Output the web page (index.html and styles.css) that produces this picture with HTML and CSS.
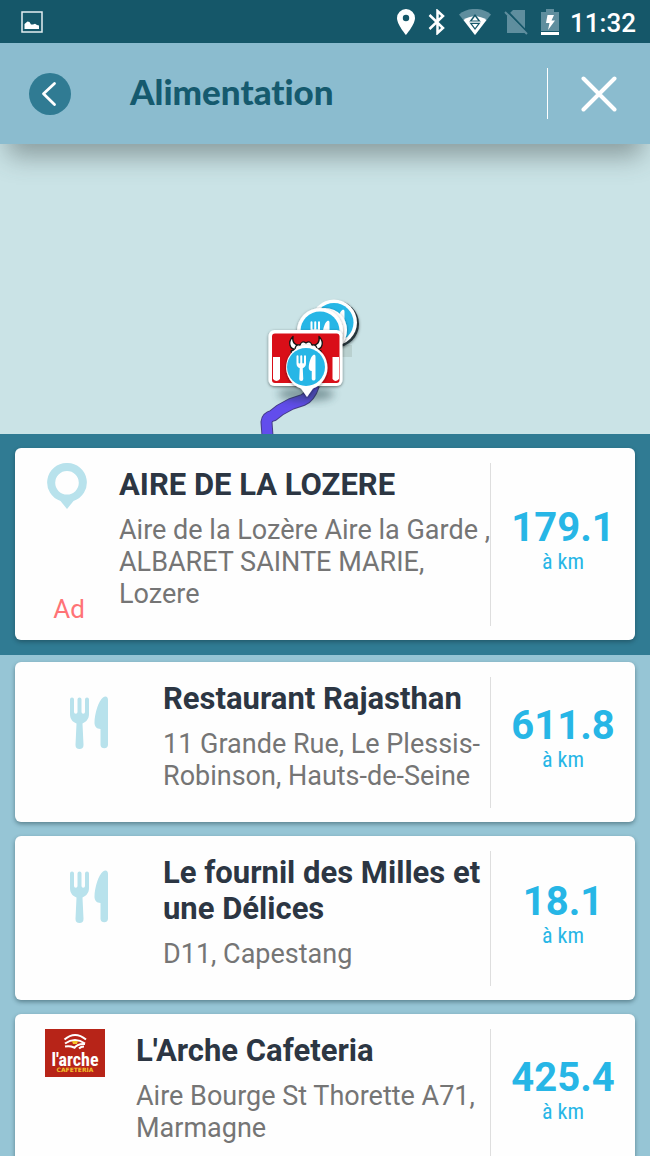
FILE: index.html
```html
<!DOCTYPE html>
<html lang="fr">
<head>
<meta charset="utf-8">
<meta name="viewport" content="width=device-width, initial-scale=1">
<title>Alimentation</title>
<link rel="stylesheet" href="styles.css">
</head>
<body>
<svg class="defs" width="0" height="0" aria-hidden="true">
  <symbol id="cutlery" viewBox="0 0 40 54">
    <path d="M1 4.500a2 2 0 0 1 4 0V17a1.600 1.600 0 0 0 3.500 0V4.500a2 2 0 0 1 4 0V17a1.600 1.600 0 0 0 3.500 0V4.500a2 2 0 0 1 4 0V19c0 5-3 8-6.500 9.500l1 21.500a4 4 0 0 1-8 0l1-21.500C3.500 27 1 24 1 19z"/>
    <path d="M39 5v45a3.800 3.800 0 0 1-7.500 0V34c-4 0-6-3-6-6C25.500 18 30 5 34 2.500c3-2 5-.500 5 2.500z"/>
  </symbol>
</svg>
<div class="screen">
  <div class="status">
    <svg class="status-picture" width="22" height="22" viewBox="0 0 22 22"><rect x="1" y="1" width="20" height="20" fill="none" stroke="#e4eef1" stroke-width="1.500"/><path d="M3.500 18v-5l3-2.500 2 .500 1.500 2.500h2l2-.800 2 1.300 2 .500V18z" fill="#fff"/></svg>
    <div class="status-right">
      <svg width="18" height="26" viewBox="0 0 18 26"><path fill="#fff" fill-rule="evenodd" d="M9 0a9 9 0 0 0-9 9c0 6.500 9 17 9 17s9-10.500 9-17a9 9 0 0 0-9-9zm0 5.800a3.200 3.200 0 1 1 0 6.400 3.200 3.200 0 0 1 0-6.400z"/></svg>
      <svg width="18" height="26" viewBox="0 0 18 26"><path fill="none" stroke="#fff" stroke-width="2.500" d="M1.500 6l13.500 13-5.500 5V2l5.500 5L1.500 20"/></svg>
      <svg width="32" height="26" viewBox="0 0 32 26"><path fill="#5f8e9e" d="M0 5.500C9-2 23-2 32 5.500L16 26z"/><path fill="#fff" d="M4.500 11c7-5 16-5 23 0L16 26z"/><path fill="#155769" d="M16 5l6 8-6 8-6-8z"/><path fill="#fff" d="M16 7.500l3 4h-6zM16 19l-3-4h6zM9 12.500h14v1.200H9z"/></svg>
      <svg width="24" height="26" viewBox="0 0 24 26"><path fill="#5f8e9e" d="M9 1h12v23H3V7z"/><path stroke="#155769" stroke-width="2" d="M3 2l22 23"/><path stroke="#5f8e9e" stroke-width="2" d="M1 3l22 22"/></svg>
      <svg width="18" height="26" viewBox="0 0 18 26"><path fill="#5f8e9e" d="M5 0h8v3h5v19H0V3h5z"/><path fill="#fff" d="M0 23h18v3H0zM6.500 6L5 14h3.500L7 21l7-9.500h-3.500L13 6z"/></svg>
      <span class="clock">11:32</span>
    </div>
  </div>
  <header class="header">
    <button class="back" type="button" aria-label="Retour"><svg width="42" height="42" viewBox="0 0 42 42"><circle cx="21" cy="21" r="21" fill="#307b93"/><path d="M25.500 10.500L14.500 20.800l11 10.800" fill="none" stroke="#fff" stroke-width="2.800" stroke-linecap="round" stroke-linejoin="round"/></svg></button>
    <h1 class="heading">Alimentation</h1>
    <button class="close" type="button" aria-label="Fermer"><svg width="36" height="36" viewBox="0 0 36 36"><path d="M2.500 2.500l31 31M33.500 2.500l-31 31" stroke="#fff" stroke-width="4" stroke-linecap="round"/></svg></button>
  </header>
  <div class="map">
    <svg class="pins" width="140" height="154" viewBox="240 280 140 154">
      <defs>
        <filter id="soft" x="-50%" y="-50%" width="200%" height="200%"><feGaussianBlur stdDeviation="4"/></filter>
        <filter id="drop" x="-30%" y="-30%" width="160%" height="160%"><feDropShadow dx="0" dy="1" stdDeviation="1.500" flood-opacity=".5"/></filter>
      </defs>
      <path d="M267.500 436L266.500 422Q267 417 273 415.500L280 410 291 404 303 400Q310 397 314 385" fill="none" stroke="#463d86" stroke-width="12" stroke-linejoin="round"/>
      <path d="M267.500 436L266.500 422Q267 417 273 415.500L280 410 291 404 303 400Q310 397 314 385" fill="none" stroke="#624dec" stroke-width="10" stroke-linejoin="round"/>
      <rect x="330" y="345" width="22" height="12" fill="#b9d0cf"/>
      <circle cx="335.500" cy="324" r="23.500" fill="#26343a" filter="url(#drop)"/>
      <circle cx="334" cy="322.500" r="23" fill="#fff"/><circle cx="334" cy="322.500" r="19.500" fill="#27b6e6"/>
      <use href="#cutlery" x="325" y="309" width="20" height="27" fill="#fff"/>
      <circle cx="325" cy="330" r="22" fill="#fff" filter="url(#drop)"/>
      <circle cx="320" cy="331" r="23" fill="#fff" filter="url(#drop)"/><circle cx="320" cy="331" r="19.500" fill="#27b6e6"/>
      <use href="#cutlery" x="310" y="320" width="20" height="27" fill="#fff"/>
      <ellipse cx="306" cy="394" rx="28" ry="7" fill="#1f3a40" opacity=".45" filter="url(#soft)"/>
      <rect x="268.500" y="330" width="74" height="56" rx="6" fill="#fff" filter="url(#drop)"/>
      <rect x="272" y="333.500" width="67.500" height="49.500" rx="3" fill="#d90e18"/>
      <path d="M273 357h7v22q-3.500 4-7 0zM332.500 357h6.500v22q-3.500 4-6.500 0z" fill="#fff"/>
      <g fill="#fff" stroke="#151515" stroke-width="1.300" stroke-linejoin="round">
        <path d="M293 336.500c-6 6-3 13 3 13l4-4c-5 0-8-3-7-9zM319 336.500c6 6 3 13-3 13l-4-4c5 0 8-3 7-9z"/>
        <path d="M292 354l-1-3 4-1q0-6 5-5 2-5 6-2 4-3 6 2 5-1 5 5l4 1-1 3z"/>
      </g>
      <path d="M306 345a22.500 22.500 0 0 1 7 43.500L307 397l-6-8.500A22.500 22.500 0 0 1 306 345z" fill="#fff" filter="url(#drop)"/>
      <circle cx="306" cy="367" r="19" fill="#27b6e6"/>
      <use href="#cutlery" x="296" y="354" width="20" height="27" fill="#fff"/>
    </svg>
  </div>
  <section class="sponsored">
    <article class="card card-ad">
      <div class="icon-cell">
        <svg width="40" height="46" viewBox="0 0 40 46"><path fill="#b8e2ec" fill-rule="evenodd" d="M20 0a19.500 19.500 0 0 1 6.500 38L20 46l-6.500-8A19.500 19.500 0 0 1 20 0zm0 8a11.800 11.800 0 1 0 0 23.600A11.800 11.800 0 0 0 20 8z"/></svg>
        <span class="ad">Ad</span>
      </div>
      <div class="info"><h2 class="name">AIRE DE LA LOZERE</h2><p class="address">Aire de la Lozère Aire la Garde , ALBARET SAINTE MARIE, Lozere</p></div>
      <div class="distance"><strong class="number">179.1</strong><span class="unit">à km</span></div>
    </article>
  </section>
  <main class="list">
    <article class="card card-plain">
      <div class="icon-cell"><svg class="cutlery" width="40" height="54"><use href="#cutlery"/></svg></div>
      <div class="info"><h2 class="name">Restaurant Rajasthan</h2><p class="address">11 Grande Rue, Le Plessis-Robinson, Hauts-de-Seine</p></div>
      <div class="distance"><strong class="number">611.8</strong><span class="unit">à km</span></div>
    </article>
    <article class="card card-plain">
      <div class="icon-cell"><svg class="cutlery" width="40" height="54"><use href="#cutlery"/></svg></div>
      <div class="info"><h2 class="name">Le fournil des Milles et une Délices</h2><p class="address">D11, Capestang</p></div>
      <div class="distance"><strong class="number">18.1</strong><span class="unit">à km</span></div>
    </article>
    <article class="card card-brand">
      <div class="icon-cell">
        <svg width="60" height="48" viewBox="0 0 60 48" role="img" aria-label="L'arche Cafeteria"><rect width="60" height="48" fill="#b72418"/><g fill="none" stroke="#fff" stroke-width="2"><path d="M19.500 10.500q10.500-9 21.500 0M20 14.500q10-7 20 0"/><path d="M20 17.500q5-1 9 1M29 19.500q3-5 11-4.500M34 19.500q2-2 5-2"/></g><path d="M27 12h6l-1 3h-4z" fill="#f3c22b"/><text class="logo-name" x="30" y="37" text-anchor="middle">l'arche</text><text class="logo-sub" x="30" y="43" text-anchor="middle">CAFETERIA</text></svg>
      </div>
      <div class="info"><h2 class="name">L'Arche Cafeteria</h2><p class="address">Aire Bourge St Thorette A71, Marmagne</p></div>
      <div class="distance"><strong class="number">425.4</strong><span class="unit">à km</span></div>
    </article>
  </main>
</div>
</body>
</html>
```
FILE: styles.css
```css
* { box-sizing: border-box; }
body { margin: 0; font-family: Roboto, "Noto Sans", sans-serif; }
h1, h2, p { margin: 0; }
svg { display: block; flex: none; }
button { padding: 0; border: 0; background: none; cursor: pointer; }
.defs { position: absolute; }
.screen { display: flex; flex-direction: column; height: 100vh; overflow: hidden; background: #96c5d5; }
.status { flex: none; display: flex; align-items: center; justify-content: space-between; height: 43px; padding: 0 14px 0 21px; background: #155769; }
.status-right { display: flex; align-items: center; gap: 13px; }
.clock { margin-left: -2px; padding-top: 2px; color: #fff; font-size: 26px; font-weight: 500; line-height: 32px; }
.header { position: relative; z-index: 1; flex: none; display: flex; align-items: center; height: 101px; padding: 0 0 0 29px; background: #8bbccf; box-shadow: 0 20px 24px -8px rgba(60, 70, 70, .45); }
.heading { flex: 1; margin-left: 59px; padding-bottom: 6px; color: #155a6e; font: 900 35px/44px Lato, "Open Sans", sans-serif; font-variant-ligatures: none; }
.close { display: flex; align-items: center; height: 51px; padding: 0 33px; border-left: 1px solid #fff; }
.map { flex: none; height: 290px; display: flex; align-items: flex-end; padding-left: 240px; background: #cae3e6; }
.sponsored { flex: none; padding: 14px 15px 15px; background: #307b93; }
.list { flex: 1; min-height: 0; display: flex; flex-direction: column; gap: 14px; padding: 7px 15px 0; overflow: hidden; }
.card { flex: none; display: grid; background: #fefefe; border-radius: 6px; box-shadow: 0 2px 4px rgba(20, 50, 60, .45); }
.card-ad { grid-template-columns: 104px 1fr 145px; }
.card-plain { grid-template-columns: 148px 1fr 145px; }
.card-brand { grid-template-columns: 121px 1fr 145px; }
.icon-cell { display: flex; flex-direction: column; align-items: center; padding: 15px 0; }
.card-plain .icon-cell { padding-top: 33px; }
.card-brand .icon-cell { align-items: flex-start; padding-left: 30px; }
.cutlery { fill: #b8e2ec; }
.ad { margin-top: auto; padding-left: 4px; color: #ff7376; font-size: 26px; line-height: 32px; }
.info { padding: 19px 0 30px; }
.name { color: #2c3643; font-size: 31px; font-weight: 700; line-height: 36px; }
.address { margin-top: 11px; color: #757575; font-size: 27px; line-height: 32px; }
.distance { display: flex; flex-direction: column; align-items: center; justify-content: center; margin: 15px 0 14px; padding-bottom: 6px; border-left: 1px solid #dedede; color: #27b6e6; }
.number { font-size: 40px; font-weight: 700; line-height: 40px; }
.unit { font: 400 22px/28px "Roboto Condensed", Roboto, sans-serif; }
.logo-name { fill: #fff; font: 700 18px "Roboto Condensed", "Open Sans", sans-serif; }
.logo-sub { fill: #f3c22b; font: 700 6px "DejaVu Sans", sans-serif; }
```
